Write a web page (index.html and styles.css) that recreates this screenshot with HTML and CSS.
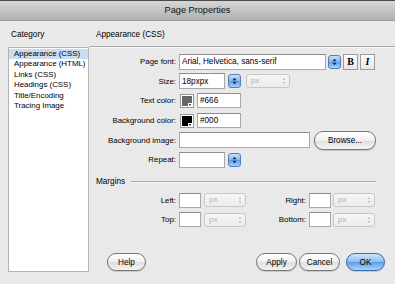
FILE: index.html
```html
<!DOCTYPE html>
<html lang="en">
<head>
  <meta charset="UTF-8">
  <title>Page Properties</title>
  <link rel="stylesheet" href="styles.css">
</head>
<body>
  <div class="window">
    <div class="titlebar">Page Properties</div>

    <div class="dialog">
      <aside class="sidebar">
        <div class="section-title">Category</div>
        <ul class="category-list">
          <li class="selected">Appearance (CSS)</li>
          <li>Appearance (HTML)</li>
          <li>Links (CSS)</li>
          <li>Headings (CSS)</li>
          <li>Title/Encoding</li>
          <li>Tracing Image</li>
        </ul>
      </aside>

      <main class="panel">
        <div class="panel-title">Appearance (CSS)</div>

        <div class="form">
          <label>Page font:</label>
          <div class="controls">
            <input class="field field-font" type="text" value="Arial, Helvetica, sans-serif">
            <span class="stepper"><svg width="5" height="8" viewBox="0 0 5 8"><path d="M0.5 3.2 L2.5 0.8 L4.5 3.2 Z M0.5 4.8 L2.5 7.2 L4.5 4.8 Z" fill="#1d2a3a"/></svg></span>
            <button class="style-btn bold">B</button>
            <button class="style-btn italic">I</button>
          </div>

          <label>Size:</label>
          <div class="controls">
            <input class="field field-small" type="text" value="18pxpx">
            <span class="stepper"><svg width="5" height="8" viewBox="0 0 5 8"><path d="M0.5 3.2 L2.5 0.8 L4.5 3.2 Z M0.5 4.8 L2.5 7.2 L4.5 4.8 Z" fill="#1d2a3a"/></svg></span>
            <span class="unit-select unit-size">px<i class="arrows"></i></span>
          </div>

          <label>Text color:</label>
          <div class="controls">
            <span class="swatch"><span class="swatch-fill grey"></span><i class="swatch-arrow"></i></span>
            <input class="field field-color" type="text" value="#666">
          </div>

          <label>Background color:</label>
          <div class="controls">
            <span class="swatch"><span class="swatch-fill black"></span><i class="swatch-arrow"></i></span>
            <input class="field field-color" type="text" value="#000">
          </div>

          <label>Background image:</label>
          <div class="controls">
            <input class="field field-image" type="text" value="">
            <button class="btn btn-browse">Browse...</button>
          </div>

          <label>Repeat:</label>
          <div class="controls">
            <input class="field field-small" type="text" value="">
            <span class="stepper"><svg width="5" height="8" viewBox="0 0 5 8"><path d="M0.5 3.2 L2.5 0.8 L4.5 3.2 Z M0.5 4.8 L2.5 7.2 L4.5 4.8 Z" fill="#1d2a3a"/></svg></span>
          </div>
        </div>

        <div class="group-title">
          <span>Margins</span>
          <span class="group-line"></span>
        </div>

        <div class="margins">
          <label>Left:</label>
          <input class="field field-margin" type="text">
          <span class="unit-select">px<i class="arrows"></i></span>
          <label>Right:</label>
          <input class="field field-margin" type="text">
          <span class="unit-select">px<i class="arrows"></i></span>

          <label>Top:</label>
          <input class="field field-margin" type="text">
          <span class="unit-select">px<i class="arrows"></i></span>
          <label>Bottom:</label>
          <input class="field field-margin" type="text">
          <span class="unit-select">px<i class="arrows"></i></span>
        </div>

        <div class="footer">
          <button class="btn btn-help">Help</button>
          <div class="footer-right">
            <button class="btn btn-apply">Apply</button>
            <button class="btn btn-cancel">Cancel</button>
            <button class="btn btn-primary">OK</button>
          </div>
        </div>
      </main>
    </div>
  </div>
</body>
</html>
```

FILE: styles.css
```css
body {
  margin: 0;
  font-family: 'Liberation Sans', Arial, sans-serif;
  font-size: 7.9px;
  color: #000;
  background-color: #e9e9e9;
  width: 395px;
  height: 284px;
  overflow: hidden;
}

.window {
  height: 284px;
  display: flex;
  flex-direction: column;
}

.titlebar {
  height: 19px;
  border-top: 1px solid #4a4a4a;
  background: linear-gradient(#d6d6d6, #b0b0b0);
  border-bottom: 1px solid #9a9a9a;
  text-align: center;
  line-height: 19px;
  font-size: 9.2px;
  color: #111;
  box-sizing: content-box;
}

.dialog {
  flex: 1;
  display: flex;
  padding: 0 0 12px 8px;
  min-height: 0;
}

/* Kategorie-Spalte */
.sidebar {
  width: 81px;
  display: flex;
  flex-direction: column;
}

.section-title {
  margin-top: 7px;
  line-height: 14px;
  padding-left: 3px;
  font-size: 8.2px;
}

.category-list {
  flex: 1;
  list-style: none;
  margin: 5px 0 0;
  padding: 1px 0 0;
  background: #fff;
  border: 1px solid #b4b4b4;
  box-sizing: border-box;
}

.category-list li {
  line-height: 10.4px;
  padding-left: 5px;
  white-space: nowrap;
}

.category-list li.selected {
  background-color: #c9dcf3;
}

/* Hauptbereich */
.panel {
  flex: 1;
  display: flex;
  flex-direction: column;
}

.panel-title {
  margin-top: 7px;
  line-height: 14px;
  padding: 0 0 4px 7px;
  font-size: 8.2px;
  border-bottom: 1px solid #a8a8a8;
  box-shadow: 0 1px 0 #f7f7f7;
}

.form {
  margin-top: 5px;
  display: grid;
  grid-template-columns: 87px 1fr;
  grid-auto-rows: 19.6px;
  column-gap: 3px;
  align-items: center;
}

.form label,
.margins label {
  text-align: right;
  white-space: nowrap;
}

.controls {
  display: flex;
  align-items: center;
}

.field {
  font-family: inherit;
  font-size: 8.2px;
  color: #000;
  margin: 0;
  padding: 0 2px;
  height: 16px;
  border: 1px solid #a9a9a9;
  border-top-color: #8c8c8c;
  background: #fff;
  box-sizing: border-box;
  outline: none;
}

.field-font {
  width: 147px;
  margin-right: 2px;
}

.field-small {
  width: 46px;
  margin-right: 3px;
}

.field-color {
  width: 44px;
  height: 15px;
  margin-left: 3px;
}

.field-image {
  width: 131px;
  margin-right: 4px;
}

.field-margin {
  width: 22px;
  height: 15px;
}

.stepper {
  width: 13px;
  height: 14px;
  border-radius: 3px;
  border: 1px solid #4f7fbf;
  background: linear-gradient(#cfe3fa, #7fb4ef 50%, #5e9ee8 51%, #a9d0fb);
  box-sizing: border-box;
  display: flex;
  align-items: center;
  justify-content: center;
}

.style-btn {
  width: 15px;
  height: 16px;
  margin-left: 2px;
  padding: 0;
  border: 1px solid #9c9c9c;
  background: linear-gradient(#ffffff, #e6e6e6);
  font-family: 'Liberation Serif', 'Times New Roman', serif;
  font-size: 10px;
  color: #000;
  line-height: 14px;
}

.style-btn.bold {
  font-weight: bold;
}

.style-btn.italic {
  font-style: italic;
  font-weight: bold;
}

.unit-select {
  position: relative;
  width: 42px;
  height: 14px;
  border: 1px solid #c8c8c8;
  border-radius: 3px;
  background: linear-gradient(#f6f6f6, #ececec);
  color: #b2b2b2;
  font-size: 8px;
  line-height: 12px;
  padding-left: 4px;
  box-sizing: border-box;
}

.unit-size {
  width: 44px;
  margin-left: 5px;
}

.arrows {
  position: absolute;
  right: 4px;
  top: 3px;
  width: 0;
  height: 6px;
  border-left: 1.5px solid transparent;
  border-right: 1.5px solid transparent;
}

.arrows::before,
.arrows::after {
  content: "";
  position: absolute;
  left: -1.5px;
  border-left: 1.5px solid transparent;
  border-right: 1.5px solid transparent;
}

.arrows::before {
  top: 0;
  border-bottom: 2px solid #aaa;
}

.arrows::after {
  bottom: 0;
  border-top: 2px solid #aaa;
}

.swatch {
  position: relative;
  width: 14px;
  height: 14px;
  margin-left: 1px;
  border: 1px solid #9a9a9a;
  background: #fff;
  box-sizing: border-box;
  display: flex;
  padding: 1px;
}

.swatch-fill {
  flex: 1;
}

.swatch-fill.grey {
  background: #666;
}

.swatch-fill.black {
  background: #000;
}

.swatch-arrow {
  position: absolute;
  right: 0;
  bottom: 0;
  width: 5px;
  height: 4px;
  background: #fff;
}

.swatch-arrow::after {
  content: "";
  position: absolute;
  left: 1px;
  top: 1px;
  border-left: 1.5px solid transparent;
  border-right: 1.5px solid transparent;
  border-top: 2px solid #000;
}

/* Buttons */
.btn {
  height: 18px;
  padding: 0;
  border: 1px solid #777;
  border-radius: 9px;
  background: linear-gradient(#ffffff, #f0f0f0 50%, #dedede 51%, #f4f4f4);
  font-family: inherit;
  font-size: 8.2px;
  color: #000;
  box-shadow: 0 1px 1px rgba(0,0,0,0.15);
}

.btn-browse {
  width: 62px;
  height: 19px;
}

.btn-help {
  width: 39px;
}

.btn-apply,
.btn-cancel {
  width: 41px;
}

.btn-primary {
  width: 39px;
  margin-left: 4px;
  border-color: #3d6aa8;
  background: linear-gradient(#cfe4fb, #8dbdf1 50%, #5d9ee9 51%, #a9d3fb);
}

/* Ränder */
.group-title {
  display: flex;
  align-items: center;
  height: 18px;
  margin-top: 3px;
  padding-left: 7px;
  padding-right: 19px;
  font-size: 8.2px;
}

.group-line {
  flex: 1;
  height: 1px;
  margin-left: 6px;
  background: #a8a8a8;
  box-shadow: 0 1px 0 #f7f7f7;
}

.margins {
  display: grid;
  grid-template-columns: 87px 22px 42px 57px 21px 45px;
  grid-auto-rows: 19.6px;
  column-gap: 3px;
  align-items: center;
}

.footer {
  margin-top: auto;
  display: flex;
  justify-content: space-between;
  padding: 0 10px 1px 18px;
}

.footer-right {
  display: flex;
  gap: 2px;
}
```
